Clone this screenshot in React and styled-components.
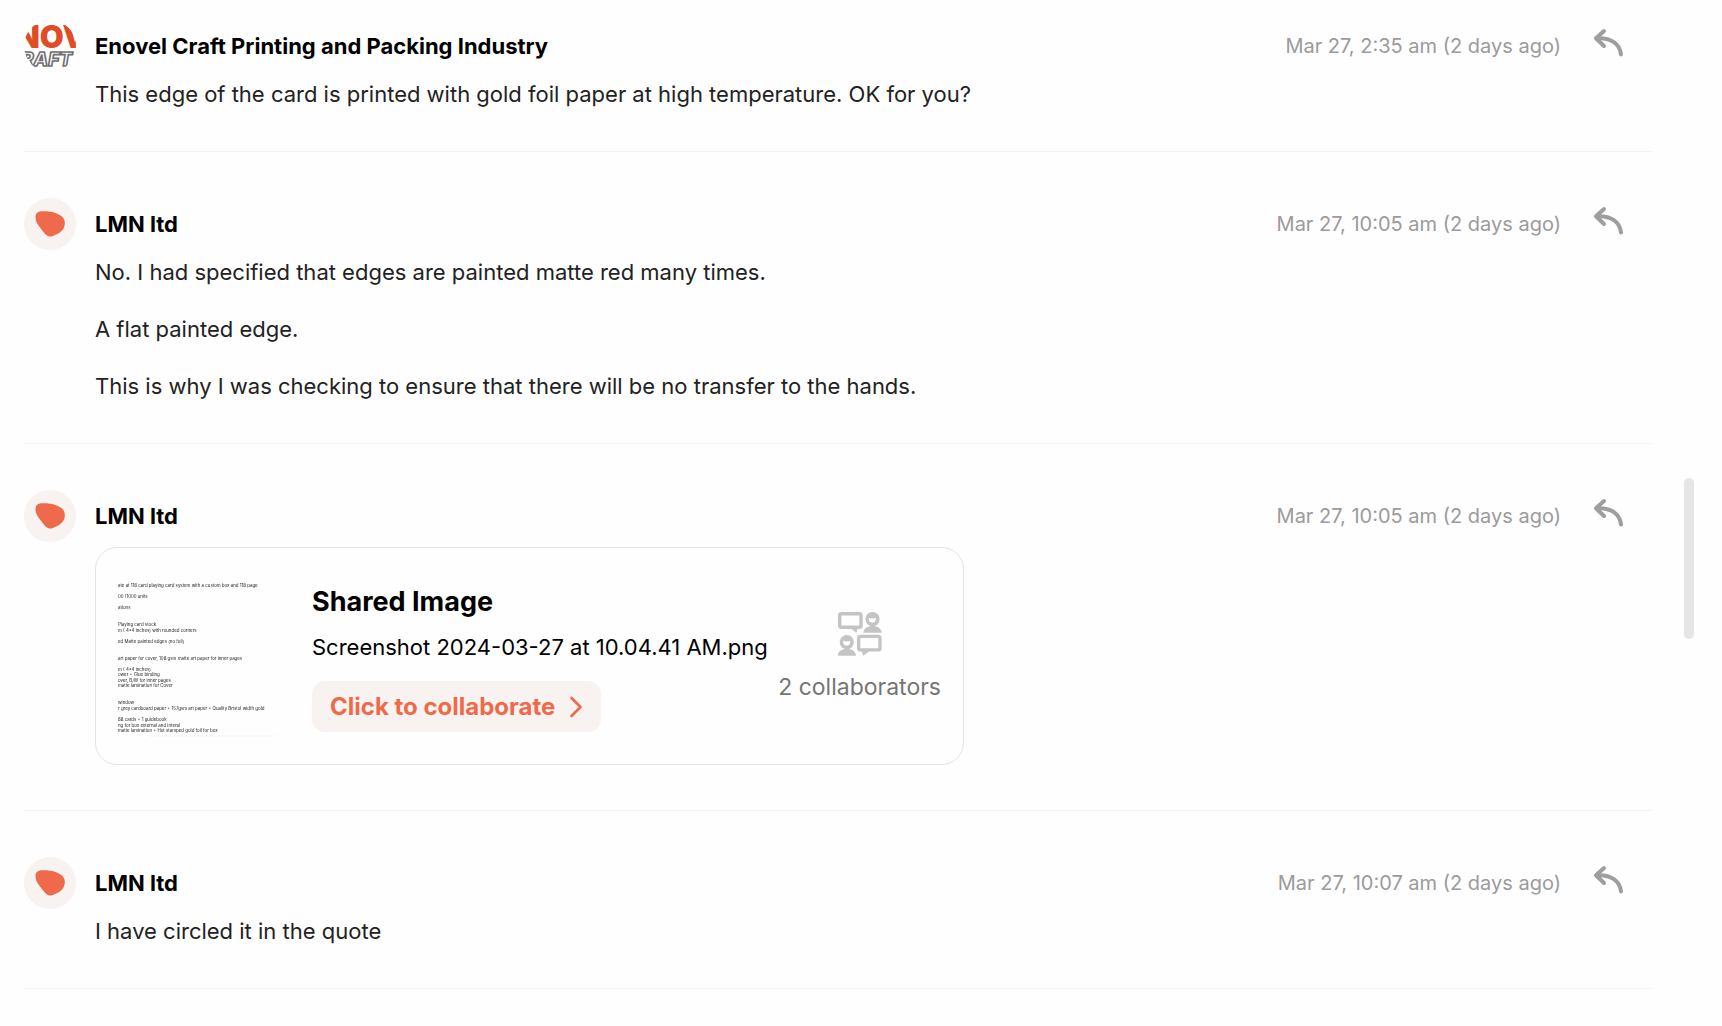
import styled, { createGlobalStyle } from "styled-components";

const GlobalStyle = createGlobalStyle`
    * {
        box-sizing: border-box;
    }

    body {
        margin: 0;
        background: #fefefe;
        color: #222222;
        font-family: Inter, "Liberation Sans", sans-serif;
        font-size: 22px;
        line-height: 34px;
    }
`

const Page = styled.div`
    display: flex;
    align-items: flex-start;
`

const Thread = styled.main`
    flex: 1;
    min-width: 0;
    padding-left: 24px;
`

const ScrollRail = styled.div`
    position: sticky;
    top: 0;
    flex: none;
    display: flex;
    flex-direction: column;
    align-items: center;
    width: 71px;
    height: 100vh;
    padding-left: 5px;
`

const ScrollSpace = styled.div`
    flex: ${({ $grow }) => $grow} 1 0;
`

const ScrollThumb = styled.div`
    width: 10px;
    height: 161px;
    border-radius: 5px;
    background: #e5e5e5;
`

const MessageRow = styled.article`
    padding: 46px 0 40px;
    border-bottom: 1px solid #f3f3f3;

    &:first-child {
        padding-top: 20px;
    }
`

const Header = styled.header`
    display: flex;
    align-items: center;
    height: 52px;
    padding-right: 24px;
`

const Avatar = styled.svg`
    flex: none;
    width: 52px;
    height: 52px;
    margin-right: 19px;
`

const Sender = styled.h2`
    flex: 1;
    margin: 0;
    color: #000000;
    font-size: 22px;
    font-weight: 700;
`

const Time = styled.time`
    color: #9b9b9b;
    font-size: 20px;
`

const ReplyButton = styled.button`
    display: flex;
    width: 36px;
    height: 36px;
    margin-left: 30px;
    padding: 0;
    border: none;
    background: none;
    color: #9e9e9e;
    cursor: pointer;
`

const Body = styled.div`
    display: flex;
    flex-direction: column;
    gap: 23px;
    margin: 5px 0 0 71px;
`

const Text = styled.p`
    margin: 0;
`

const Card = styled.section`
    display: flex;
    align-items: center;
    width: 869px;
    max-width: 100%;
    height: 218px;
    margin-bottom: 5px;
    padding: 4px 22px 0;
    border: 1px solid #e4e4e4;
    border-radius: 22px;
    color: #000000;
`

const Thumbnail = styled.svg`
    flex: none;
    width: 160px;
    height: 160px;
    margin-right: 34px;
    filter: blur(0.7px);
`

const CardInfo = styled.div`
    flex: 1;
    display: flex;
    flex-direction: column;
    align-items: flex-start;
`

const CardTitle = styled.h3`
    margin: 0 0 10px;
    font-size: 27px;
    line-height: 36px;
    font-weight: 700;
`

const CollaborateButton = styled.button`
    display: flex;
    align-items: center;
    gap: 14px;
    height: 51px;
    margin-top: 17px;
    padding: 0 18px;
    border: none;
    border-radius: 13px;
    background: #f8f2f0;
    color: #ee6a4b;
    font-family: inherit;
    font-size: 24px;
    font-weight: 700;
    cursor: pointer;
`

const Collaborators = styled.div`
    display: flex;
    flex-direction: column;
    align-items: center;
    gap: 14px;
    color: #757575;
    font-size: 23px;
`

const BlobAvatar = () => (
    <Avatar viewBox="0 0 52 52" aria-hidden="true">
        <circle cx="26" cy="26" r="26" fill="#f8f2f0" />
        <path
            d="M11.5 19C11.5 15 14 13.3 18 13.2C27 12.8 34 15 38 18.5C41.5 21.5 41.5 27 39.5 30.5C37 34.5 32 37 28 38.3C24.5 39 22 37.5 19.5 34C16 29.5 11.5 25 11.5 19Z"
            fill="#ee6a4b"
        />
    </Avatar>
)

const CraftAvatar = () => (
    <Avatar viewBox="0 0 52 52" aria-hidden="true">
        <clipPath id="craft-avatar">
            <circle cx="26" cy="26" r="26" />
        </clipPath>
        <g clipPath="url(#craft-avatar)" fontFamily="Inter, sans-serif">
            <text x="-8" y="28" fontSize="31" fontWeight="900" fill="#df4c26">NOV</text>
            <text x="-3" y="46" fontSize="19" fontWeight="800" fontStyle="italic" fill="#fefefe" stroke="#6f6f6f" strokeWidth="1.6">RAFT</text>
        </g>
    </Avatar>
)

const ReplyIcon = () => (
    <svg width="36" height="36" viewBox="0 0 36 36" fill="none" stroke="currentColor" strokeWidth="4" strokeLinecap="round" strokeLinejoin="round">
        <path d="M13 3L5 10.3L13 18" />
        <path d="M6 10.3C20 9.5 29 16 30 26.5" />
    </svg>
)

const ChevronIcon = () => (
    <svg width="14" height="22" viewBox="0 0 14 22" fill="none" stroke="currentColor" strokeWidth="2.6" strokeLinecap="round" strokeLinejoin="round">
        <path d="M2.5 2L11.5 11L2.5 20" />
    </svg>
)

const Person = (props) => (
    <g {...props}>
        <circle cx="102" cy="21" r="21" fill="#c4c4c4" />
        <path d="M91 17Q97 21 112 18V21A10.500 10.500 0 0 1 91 21Z" fill="#fefefe" />
        <path d="M75 61C75 49 87 41 102 41C117 41 129 49 129 61Z" fill="#c4c4c4" />
    </g>
)

const CollaboratorsIcon = () => (
    <svg width="44" height="44" viewBox="0 0 130 130" aria-hidden="true">
        <g fill="none" stroke="#c4c4c4" strokeWidth="10">
            <rect x="5" y="5" width="63" height="40" rx="5" />
            <rect x="61" y="72" width="63" height="40" rx="5" />
        </g>
        <path d="M36 46L54 60L58 44ZM70 112L75 128L94 114Z" fill="#c4c4c4" stroke="#c4c4c4" strokeWidth="2" />
        <Person />
        <Person transform="translate(-76 68)" />
    </svg>
)

// line number on the page, text
const pageLines = [
    [0, "ate at 118 card playing card system with a custom box and 118 page"],
    [2, "00 (1000 units"],
    [4, "ations"],
    [7, "Playing card stock"],
    [8, "m ( 4*4 inches) with rounded corners"],
    [10, "ed Matte painted edges (no foil)"],
    [13, "art paper for cover, 108 gsm matte art paper for inner pages"],
    [15, "m ( 4*4 inches)"],
    [16, "ower + Glue binding"],
    [17, "over, B/W for inner pages"],
    [18, "matte lamination for Cover"],
    [21, "window"],
    [22, "r grey cardboard paper + 157gsm art paper + Quality Bristol width gold"],
    [24, "88 cards + 1 guidebook"],
    [25, "ng for box external and interal"],
    [26, "matte lamination + Hot stamped gold foil for box"],
]

const PageThumbnail = () => (
    <Thumbnail viewBox="0 0 160 160" role="img" aria-label="Screenshot preview">
        <g fontSize="4.400" fill="#222222">
            {pageLines.map(([line, text]) => (
                <text key={line} x="0" y={9 + line * 5.58}>{text}</text>
            ))}
        </g>
        <path d="M32 158H160" stroke="#dddddd" strokeWidth="1" strokeDasharray="1 3" />
    </Thumbnail>
)

const SharedImage = ({ fileName, count }) => (
    <Card>
        <PageThumbnail />
        <CardInfo>
            <CardTitle>Shared Image</CardTitle>
            <Text>{fileName}</Text>
            <CollaborateButton type="button">
                Click to collaborate
                <ChevronIcon />
            </CollaborateButton>
        </CardInfo>
        <Collaborators>
            <CollaboratorsIcon />
            <span>{count} collaborators</span>
        </Collaborators>
    </Card>
)

const messages = [
    {
        id: 1,
        sender: "Enovel Craft Printing and Packing Industry",
        avatar: CraftAvatar,
        time: "Mar 27, 2:35 am (2 days ago)",
        text: ["This edge of the card is printed with gold foil paper at high temperature. OK for you?"],
    },
    {
        id: 2,
        sender: "LMN ltd",
        avatar: BlobAvatar,
        time: "Mar 27, 10:05 am (2 days ago)",
        text: [
            "No. I had specified that edges are painted matte red many times.",
            "A flat painted edge.",
            "This is why I was checking to ensure that there will be no transfer to the hands.",
        ],
    },
    {
        id: 3,
        sender: "LMN ltd",
        avatar: BlobAvatar,
        time: "Mar 27, 10:05 am (2 days ago)",
        image: { fileName: "Screenshot 2024-03-27 at 10.04.41 AM.png", count: 2 },
    },
    {
        id: 4,
        sender: "LMN ltd",
        avatar: BlobAvatar,
        time: "Mar 27, 10:07 am (2 days ago)",
        text: ["I have circled it in the quote"],
    },
]

const Message = ({ message }) => {
    const { sender, avatar: SenderAvatar, time, text, image } = message

    return (
        <MessageRow>
            <Header>
                <SenderAvatar />
                <Sender>{sender}</Sender>
                <Time>{time}</Time>
                <ReplyButton type="button" aria-label={`Reply to ${sender}`}>
                    <ReplyIcon />
                </ReplyButton>
            </Header>
            <Body>
                {text && text.map((line) => <Text key={line}>{line}</Text>)}
                {image && <SharedImage {...image} />}
            </Body>
        </MessageRow>
    )
}

const App = () => (
    <>
        <GlobalStyle />
        <Page>
            <Thread>
                {messages.map((message) => <Message key={message.id} message={message} />)}
            </Thread>
            <ScrollRail aria-hidden="true">
                <ScrollSpace $grow={478} />
                <ScrollThumb />
                <ScrollSpace $grow={387} />
            </ScrollRail>
        </Page>
    </>
)

export default App;
